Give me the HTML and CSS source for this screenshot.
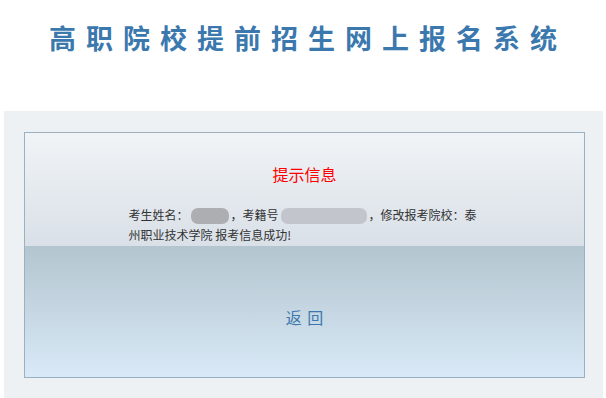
FILE: index.html
```html
<!DOCTYPE html>
<html>
<head>
  <title>高职院校提前招生网上报名系统</title>
  <link rel="stylesheet" href="styles.css">
</head>
<body>
  <div class="header">
    <h1 class="site-title">高职院校提前招生网上报名系统</h1>
  </div>
  <div class="panel">
    <div class="msg-box">
      <div class="msg-top">
        <div class="msg-title">提示信息</div>
        <div class="msg-text">考生姓名：<span class="mask mask-name"></span>，考籍号<span class="mask mask-id"></span>，修改报考院校：泰<br>州职业技术学院 报考信息成功!</div>
      </div>
      <div class="msg-bottom">
        <a class="back-link" href="#">返 回</a>
      </div>
    </div>
  </div>
</body>
</html>
```

FILE: styles.css
```css
body {
  margin: 0;
  padding: 0;
  font-family: "Noto Sans CJK SC", "Liberation Sans", sans-serif;
  background-color: #fff;
  color: #333;
}

.header {
  height: 111px;
  padding-top: 18px;
  box-sizing: border-box;
  text-align: center;
}

.site-title {
  margin: 0;
  font-size: 27px;
  font-weight: bold;
  letter-spacing: 10px;
  padding-left: 10px;
  color: #3b78ae;
  line-height: 40px;
}

.panel {
  margin: 0 3px 0 4px;
  background-color: #edf1f4;
  padding: 21px 18px 21px 20px;
}

.msg-box {
  border: 1px solid #9bb0c0;
}

.msg-top {
  height: 113px;
  background: linear-gradient(#f1f4f7, #d9e0e7);
  box-sizing: border-box;
  padding-top: 29px;
}

.msg-title {
  text-align: center;
  color: #f00;
  font-size: 16px;
  line-height: 24px;
}

.msg-text {
  width: 352px;
  margin: 19px auto 0;
  font-size: 12px;
  line-height: 20px;
  color: #333;
  white-space: nowrap;
}

.mask {
  display: inline-block;
  height: 16px;
  vertical-align: -4px;
  margin: 0 2px;
  background-color: #b2b4ba;
  border-radius: 7px;
}

.mask-name {
  width: 38px;
  background-color: #adaeb2;
}

.mask-id {
  width: 86px;
  background-color: #c3c5cc;
}

.msg-bottom {
  height: 131px;
  box-sizing: border-box;
  padding-top: 10px;
  background: linear-gradient(#b3c5cf, #d9e9f7);
  display: flex;
  align-items: center;
  justify-content: center;
}

.back-link {
  color: #3c78ae;
  font-size: 16px;
  text-decoration: none;
  letter-spacing: 1px;
  margin-left: 1px;
}
```
